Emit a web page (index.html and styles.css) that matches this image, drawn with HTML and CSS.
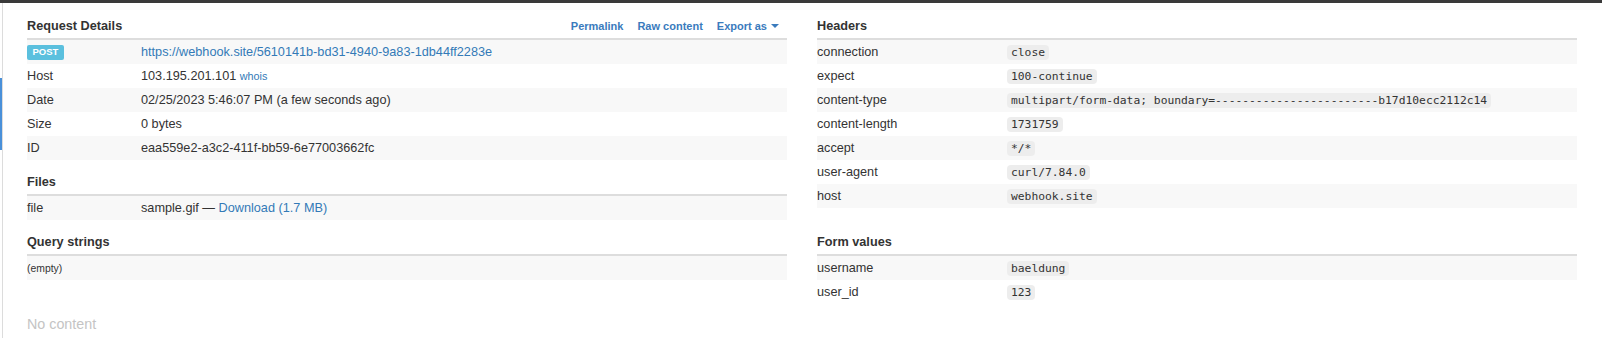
FILE: index.html
```html
<!DOCTYPE html>
<html lang="en">
<head>
    <meta charset="UTF-8">
    <meta name="viewport" content="width=device-width, initial-scale=1.0">
    <title>Request Details - Webhook.site</title>
    <link rel="stylesheet" href="styles.css">
</head>
<body>
    <div class="topbar"></div>
    <div class="layout">
        <aside class="sidebar-edge"><span class="active-marker"></span></aside>

        <main class="content">
            <div class="grid">
                <div class="column">
                    <section>
                        <div class="section-head top">
                            <h4>Request Details</h4>
                            <nav class="actions">
                                <a href="#">Permalink</a>
                                <a href="#">Raw content</a>
                                <a href="#">Export as <span class="caret"></span></a>
                            </nav>
                        </div>
                        <table class="details">
                            <tr>
                                <td class="key"><span class="badge">POST</span></td>
                                <td><a href="#">https://webhook.site/5610141b-bd31-4940-9a83-1db44ff2283e</a></td>
                            </tr>
                            <tr>
                                <td class="key">Host</td>
                                <td>103.195.201.101 <a href="#" class="small-link">whois</a></td>
                            </tr>
                            <tr>
                                <td class="key">Date</td>
                                <td>02/25/2023 5:46:07 PM (a few seconds ago)</td>
                            </tr>
                            <tr>
                                <td class="key">Size</td>
                                <td>0 bytes</td>
                            </tr>
                            <tr>
                                <td class="key">ID</td>
                                <td>eaa559e2-a3c2-411f-bb59-6e77003662fc</td>
                            </tr>
                        </table>
                    </section>

                    <section>
                        <div class="section-head">
                            <h4>Files</h4>
                        </div>
                        <table class="details">
                            <tr>
                                <td class="key">file</td>
                                <td>sample.gif &mdash; <a href="#">Download (1.7 MB)</a></td>
                            </tr>
                        </table>
                    </section>
                </div>

                <div class="column">
                    <section>
                        <div class="section-head top">
                            <h4>Headers</h4>
                        </div>
                        <table class="details wide-key">
                            <tr><td class="key">connection</td><td><code>close</code></td></tr>
                            <tr><td class="key">expect</td><td><code>100-continue</code></td></tr>
                            <tr><td class="key">content-type</td><td><code>multipart/form-data; boundary=------------------------b17d10ecc2112c14</code></td></tr>
                            <tr><td class="key">content-length</td><td><code>1731759</code></td></tr>
                            <tr><td class="key">accept</td><td><code>*/*</code></td></tr>
                            <tr><td class="key">user-agent</td><td><code>curl/7.84.0</code></td></tr>
                            <tr><td class="key">host</td><td><code>webhook.site</code></td></tr>
                        </table>
                    </section>
                </div>

                <div class="column">
                    <section>
                        <div class="section-head">
                            <h4>Query strings</h4>
                        </div>
                        <table class="details">
                            <tr><td class="empty">(empty)</td></tr>
                        </table>
                    </section>
                    <p class="no-content">No content</p>
                </div>

                <div class="column">
                    <section>
                        <div class="section-head">
                            <h4>Form values</h4>
                        </div>
                        <table class="details wide-key">
                            <tr><td class="key">username</td><td><code>baeldung</code></td></tr>
                            <tr><td class="key">user_id</td><td><code>123</code></td></tr>
                        </table>
                    </section>
                </div>
            </div>
        </main>
    </div>
</body>
</html>
```

FILE: styles.css
```css
html, body {
    margin: 0;
    padding: 0;
    background: white;
}
body {
    font-family: "Liberation Sans", Arial, sans-serif;
    font-size: 12.7px;
    color: #333;
}
a {
    color: #337ab7;
    text-decoration: none;
}
.topbar {
    height: 3px;
    background: #3a3a3a;
}
.layout {
    display: flex;
    min-height: 335px;
}
.sidebar-edge {
    width: 2px;
    border-right: 1px solid #dcdcdc;
    flex-shrink: 0;
}
.active-marker {
    display: block;
    width: 2px;
    height: 72px;
    margin-top: 75px;
    background: #4a90d9;
}
.content {
    flex: 1;
    padding: 0 25px 0 24px;
}
.grid {
    display: grid;
    grid-template-columns: 1fr 1fr;
    column-gap: 30px;
}
.section-head {
    display: flex;
    align-items: baseline;
    justify-content: space-between;
    height: 36px;
    box-sizing: border-box;
    padding-top: 14px;
    border-bottom: 2px solid #dddddd;
}
.section-head.top {
    height: 37px;
    padding-top: 15px;
}
h4 {
    margin: 0;
    font-size: 12.7px;
    font-weight: bold;
    line-height: 16px;
    color: #333;
}
.actions {
    display: flex;
    gap: 14px;
    padding-right: 8px;
}
.actions a {
    font-size: 11px;
    font-weight: bold;
    color: #3a7bbd;
}
.caret {
    display: inline-block;
    width: 0;
    height: 0;
    margin-left: 1px;
    vertical-align: 2px;
    border-top: 4px solid #3a7bbd;
    border-left: 4px solid transparent;
    border-right: 4px solid transparent;
}
.details {
    width: 100%;
    border-collapse: collapse;
}
.details tr {
    height: 24px;
}
.details tr:nth-child(odd) {
    background: #f8f8f8;
}
.details td {
    padding: 0;
    vertical-align: middle;
    line-height: 16px;
    white-space: nowrap;
}
.details .key {
    width: 15%;
}
.wide-key .key {
    width: 25%;
}
.badge {
    display: inline-block;
    padding: 2px 5.5px 3.5px;
    font-size: 9.5px;
    font-weight: bold;
    line-height: 1;
    color: white;
    background: #5bc0de;
    border-radius: 2px;
    vertical-align: middle;
}
.small-link {
    font-size: 10.8px;
}
code {
    font-family: "DejaVu Sans Mono", Menlo, monospace;
    font-size: 11.3px;
    padding: 1px 4px;
    line-height: 16px;
    background: #ededed;
    border-radius: 4px;
    color: #333;
}
.details .empty {
    padding-top: 2px;
    font-size: 10.4px;
}
.no-content {
    margin: 35px 0 0;
    font-size: 14.3px;
    line-height: 18px;
    color: #c4c4c4;
}
```
